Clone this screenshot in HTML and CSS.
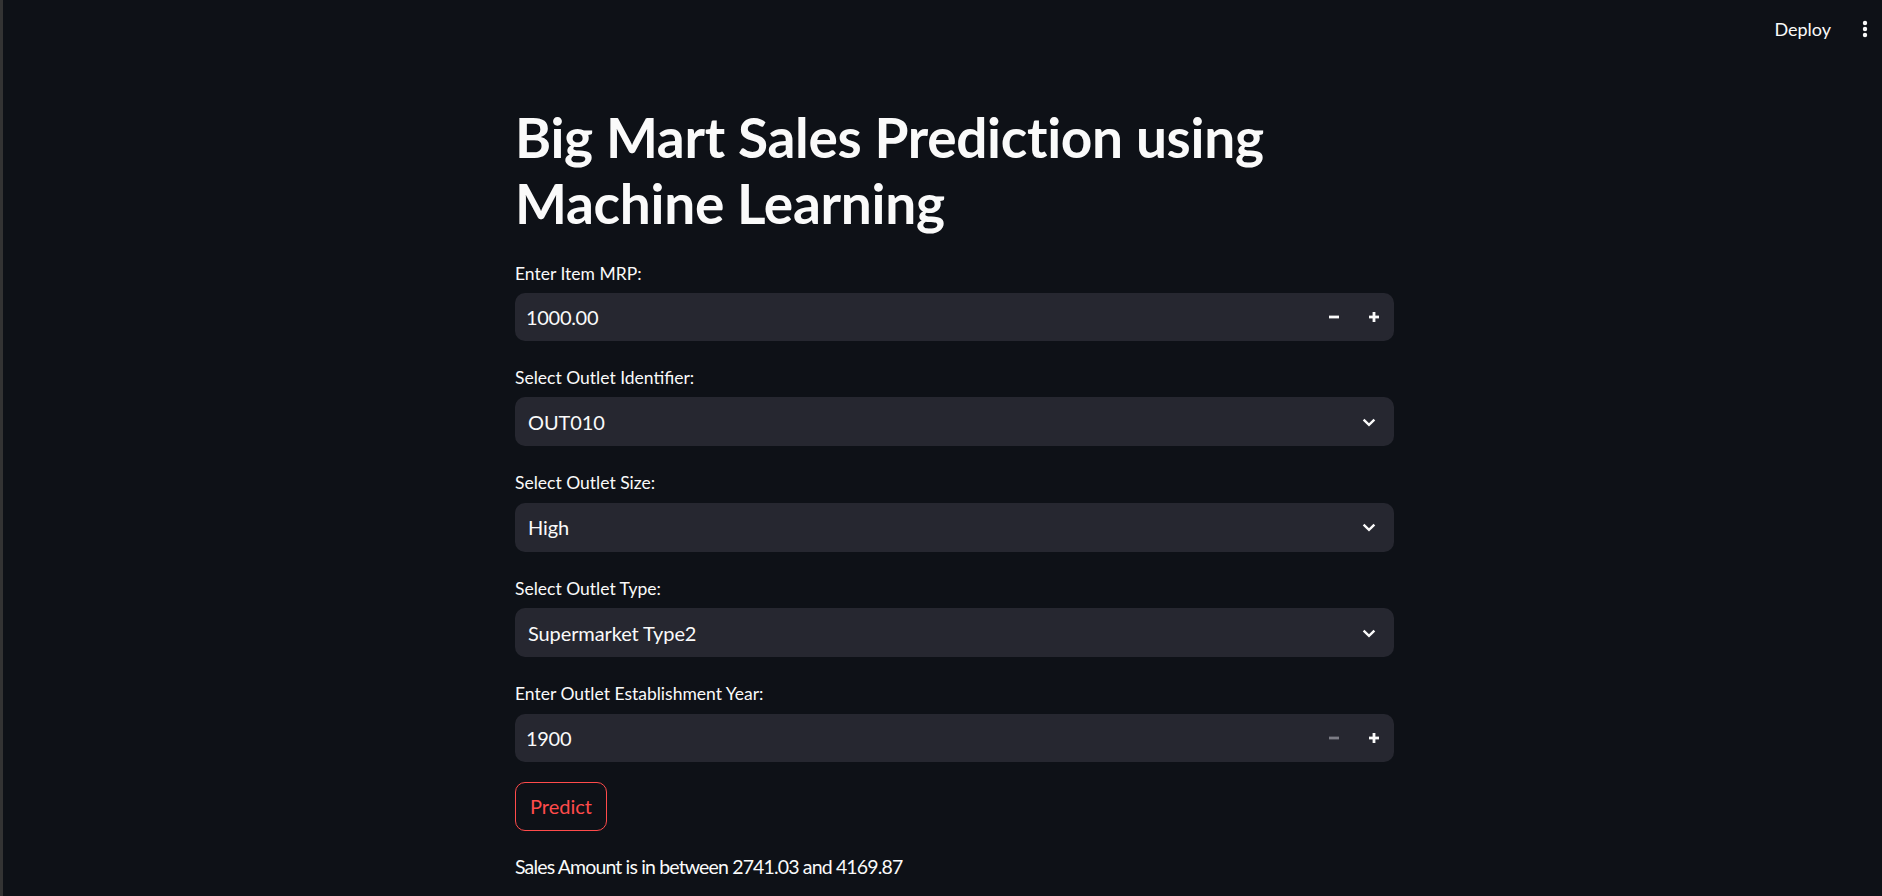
FILE: index.html
```html
<!DOCTYPE html>
<html lang="en">
<head>
<meta charset="utf-8">
<title>Big Mart Sales Prediction</title>
<link rel="stylesheet" href="styles.css">
</head>
<body>
<div class="app">
  <div class="edge"></div>
  <div class="view">
    <header class="topbar">
      <button class="deploy">Deploy</button>
      <button class="menu" aria-label="Main menu">
        <svg width="6" height="18" viewBox="0 0 6 18"><circle cx="3" cy="3" r="2.2" fill="#fafafa"/><circle cx="3" cy="9" r="2.2" fill="#fafafa"/><circle cx="3" cy="15" r="2.2" fill="#fafafa"/></svg>
      </button>
    </header>
    <main class="main">
      <div class="block">
        <h1 class="title">Big Mart Sales Prediction using Machine Learning</h1>

        <div class="field">
          <div class="label">Enter Item MRP:</div>
          <div class="numinput">
            <span class="value">1000.00</span>
            <button class="step" aria-label="Decrement"><svg width="10" height="10" viewBox="0 0 10 10"><rect x="0" y="3.6" width="10" height="2.8" fill="#fafafa"/></svg></button>
            <button class="step" aria-label="Increment"><svg width="10" height="10" viewBox="0 0 10 10"><rect x="0" y="3.6" width="10" height="2.8" fill="#fafafa"/><rect x="3.6" y="0" width="2.8" height="10" fill="#fafafa"/></svg></button>
          </div>
        </div>

        <div class="field">
          <div class="label">Select Outlet Identifier:</div>
          <div class="select">
            <span class="value-sel">OUT010</span>
            <svg class="chev" width="20" height="20" viewBox="0 0 20 20"><polyline points="4.6,7.6 10,12.8 15.4,7.6" fill="none" stroke="#fafafa" stroke-width="2.4"/></svg>
          </div>
        </div>

        <div class="field">
          <div class="label">Select Outlet Size:</div>
          <div class="select">
            <span class="value-sel">High</span>
            <svg class="chev" width="20" height="20" viewBox="0 0 20 20"><polyline points="4.6,7.6 10,12.8 15.4,7.6" fill="none" stroke="#fafafa" stroke-width="2.4"/></svg>
          </div>
        </div>

        <div class="field">
          <div class="label">Select Outlet Type:</div>
          <div class="select">
            <span class="value-sel">Supermarket Type2</span>
            <svg class="chev" width="20" height="20" viewBox="0 0 20 20"><polyline points="4.6,7.6 10,12.8 15.4,7.6" fill="none" stroke="#fafafa" stroke-width="2.4"/></svg>
          </div>
        </div>

        <div class="field">
          <div class="label">Enter Outlet Establishment Year:</div>
          <div class="numinput">
            <span class="value">1900</span>
            <button class="step" aria-label="Decrement" disabled><svg width="10" height="10" viewBox="0 0 10 10"><rect x="0" y="3.6" width="10" height="2.8" fill="#7c7c85"/></svg></button>
            <button class="step" aria-label="Increment"><svg width="10" height="10" viewBox="0 0 10 10"><rect x="0" y="3.6" width="10" height="2.8" fill="#fafafa"/><rect x="3.6" y="0" width="2.8" height="10" fill="#fafafa"/></svg></button>
          </div>
        </div>

        <div class="actions">
          <button class="predict">Predict</button>
        </div>

        <p class="result">Sales Amount is in between 2741.03 and 4169.87</p>
      </div>
    </main>
  </div>
</div>
</body>
</html>
```

FILE: styles.css
```css
* { box-sizing: border-box; }

html, body {
  margin: 0;
  background: #0e1117;
  color: #fafafa;
  font-family: Lato, "Noto Sans", sans-serif;
}

.app {
  display: flex;
  min-height: 896px;
}

.edge {
  flex: none;
  width: 3px;
  background: #333333;
}

.view {
  flex: 1;
  min-width: 0;
}

.topbar {
  height: 58px;
  display: flex;
  justify-content: flex-end;
  align-items: center;
  padding-right: 5px;
}

.deploy {
  background: none;
  border: 0;
  color: #fafafa;
  font-family: inherit;
  font-size: 18px;
  padding: 0 12px;
  margin-right: 10px;
  height: 40px;
}

.menu {
  background: none;
  border: 0;
  width: 24px;
  height: 40px;
  display: flex;
  align-items: center;
  justify-content: center;
  padding: 0;
}

.main {
  display: flex;
  justify-content: center;
  padding-left: 24px;
  padding-top: 46px;
}

.block {
  width: 879px;
  display: flex;
  flex-direction: column;
  gap: 20px;
}

.title {
  margin: 0 0 2px;
  font-size: 55px;
  line-height: 66px;
  font-weight: 700;
  letter-spacing: -0.3px;
}

.field + .field {
  margin-top: 1.4px;
}

.label {
  display: flex;
  align-items: center;
  min-height: 30px;
  margin-bottom: 5px;
  font-size: 17.5px;
}

.numinput {
  height: 48px;
  background: #262730;
  border-radius: 10px;
  display: flex;
  align-items: center;
}

.value {
  flex: 1;
  padding-left: 11px;
  font-size: 20px;
  letter-spacing: -0.3px;
}

.step {
  width: 40px;
  height: 100%;
  background: none;
  border: 0;
  padding: 0;
  display: flex;
  align-items: center;
  justify-content: center;
}

.select {
  height: 49px;
  background: #262730;
  border-radius: 10px;
  display: flex;
  align-items: center;
  justify-content: space-between;
  padding: 0 15px 0 13px;
}

.value-sel {
  font-size: 20px;
  letter-spacing: -0.1px;
}

.actions {
  display: flex;
}

.predict {
  height: 49px;
  padding: 0 14px;
  background: transparent;
  border: 1px solid #ff4b4b;
  border-radius: 10px;
  color: #ff4b4b;
  font-family: inherit;
  font-size: 20px;
}

.result {
  margin: 0;
  font-size: 19.5px;
  line-height: 32px;
  letter-spacing: -0.85px;
}
```
